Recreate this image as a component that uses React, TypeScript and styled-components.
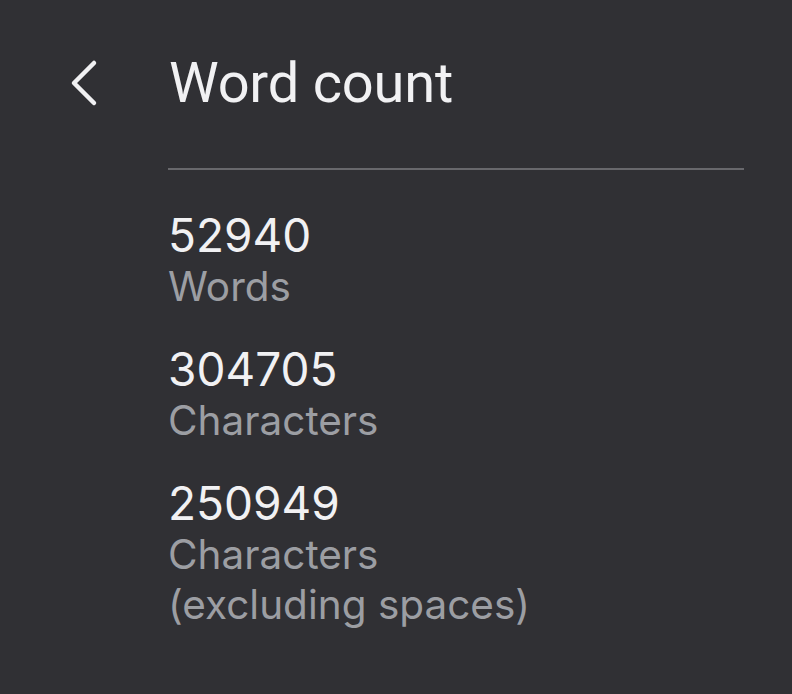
import styled, { createGlobalStyle } from 'styled-components';

const GlobalStyle = createGlobalStyle`
  html, body {
    margin: 0;
    padding: 0;
    background: #303034;
  }
  body {
    font-family: Inter, Roboto, "Liberation Sans", sans-serif;
  }
`;

const Page = styled.div`
  width: 792px;
  height: 694px;
  background: #303034;
  overflow: hidden;
`;

const Header = styled.div`
  display: flex;
  align-items: center;
  height: 86px;
  padding: 40px 0 0 66px;
`;

const BackButton = styled.button`
  width: 103px;
  height: 50px;
  padding: 0;
  border: none;
  background: transparent;
  display: flex;
  align-items: center;
  color: #f1f1f3;
`;

const Title = styled.h1`
  margin: 0;
  font-family: Roboto, "Liberation Sans", sans-serif;
  font-size: 56px;
  font-weight: 400;
  color: #f1f1f3;
  letter-spacing: -0.2px;
`;

const Divider = styled.hr`
  margin: 42px 48px 0 168px;
  border: none;
  height: 2px;
  background: #68686c;
`;

const Stats = styled.div`
  display: flex;
  flex-direction: column;
  gap: 30px;
  padding: 38px 0 0 168px;
`;

const Stat = styled.div`
  display: flex;
  flex-direction: column;
`;

const Value = styled.div`
  font-size: 46px;
  line-height: 54px;
  color: #f1f1f3;
`;

const Label = styled.div`
  font-size: 40.5px;
  line-height: 50px;
  color: #9c9ea3;
`;

const stats = [
  { value: '52940', label: ['Words'] },
  { value: '304705', label: ['Characters'] },
  { value: '250949', label: ['Characters', '(excluding spaces)'] },
];

export default function App() {
  return (
    <Page>
      <GlobalStyle />
      <Header>
        <BackButton aria-label="Back">
          <svg width="36" height="48" viewBox="0 0 36 48" fill="none">
            <path d="M28 4 L8 24 L28 44" stroke="currentColor" strokeWidth="4.5" strokeLinecap="round" strokeLinejoin="round" />
          </svg>
        </BackButton>
        <Title>Word count</Title>
      </Header>
      <Divider />
      <Stats>
        {stats.map((s) => (
          <Stat key={s.value}>
            <Value>{s.value}</Value>
            {s.label.map((l) => (
              <Label key={l}>{l}</Label>
            ))}
          </Stat>
        ))}
      </Stats>
    </Page>
  );
}
